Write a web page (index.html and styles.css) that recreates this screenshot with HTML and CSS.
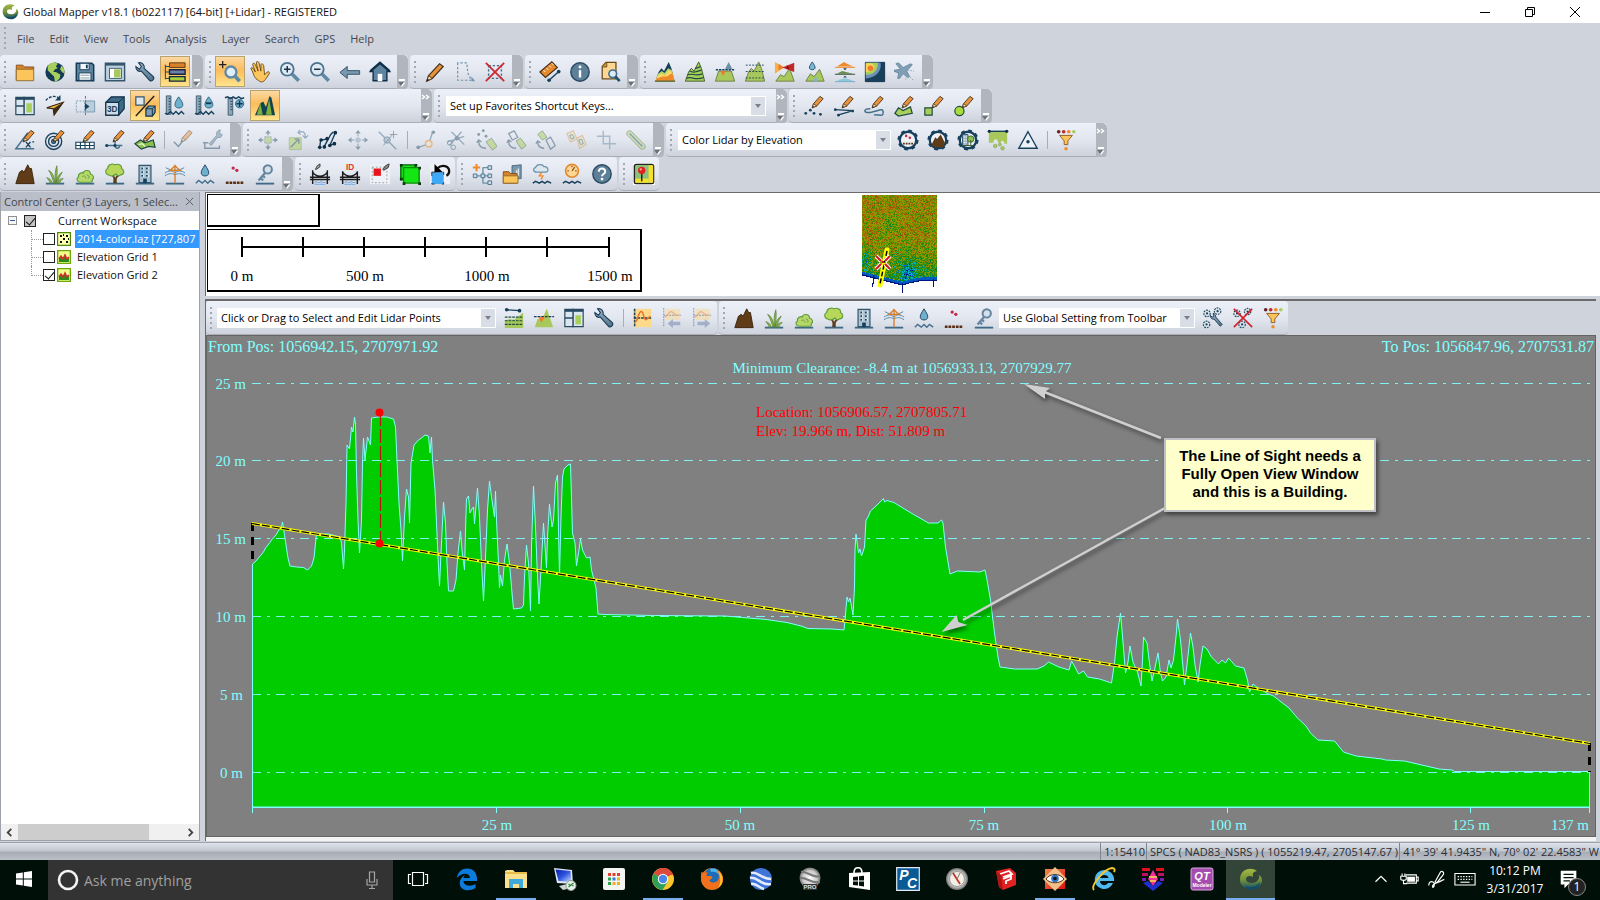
FILE: index.html
```html
<!DOCTYPE html>
<html lang="en">
<head>
    <meta charset="UTF-8">
    <title>Global Mapper v18.1</title>
    <link rel="stylesheet" href="styles.css">
</head>
<body>

    <!-- Gradients used by the icons -->
    <svg class="gradients" aria-hidden="true">
        <defs>
            <linearGradient id="g-steel" x1="0" y1="0" x2="0" y2="1"><stop offset="0" stop-color="#9db4c6"/><stop offset="1" stop-color="#4d7189"/></linearGradient>
            <linearGradient id="g-logo" x1="0" y1="0" x2="0" y2="1"><stop offset="0" stop-color="#a3b845"/><stop offset=".55" stop-color="#6f8f3a"/><stop offset="1" stop-color="#0f4d6b"/></linearGradient>
            <linearGradient id="g-screen" x1="0" y1="0" x2="1" y2="1"><stop offset="0" stop-color="#0a1eb0"/><stop offset=".5" stop-color="#2f55e0"/><stop offset="1" stop-color="#cfe0ff"/></linearGradient>
            <linearGradient id="g-red" x1="0" y1="0" x2="1" y2="1"><stop offset="0" stop-color="#f08a4a"/><stop offset="1" stop-color="#e01010"/></linearGradient>
            <radialGradient id="g-silver"><stop offset="0" stop-color="#fff"/><stop offset=".7" stop-color="#c9c9c9"/><stop offset="1" stop-color="#6c6c6c"/></radialGradient>
        </defs>
    </svg>

    <!-- Icon sprite -->
    <svg class="sprite" aria-hidden="true">
        <defs>
            <g id="pencil"><path d="M10 14l1.500-4.500L18.500 1.500l3.500 2.500-7 8z" fill="#e8923a" stroke="#4a3420" stroke-width="1"/><path d="M10 14l1.500-4.500 3.500 2.500z" fill="#f6d9a8" stroke="#4a3420" stroke-width=".8"/><path d="M10 14l.8-2 1.200.9z" fill="#222"/></g>
            <g id="base"><path d="M2 22.500h20" stroke="#3f6a86" stroke-width="2"/></g>
            <g id="gear"><circle cx="12" cy="12" r="9" fill="#eef2f7" stroke="#17405c" stroke-width="2.500"/><circle cx="12" cy="12" r="10.300" fill="none" stroke="#17405c" stroke-width="2.400" stroke-dasharray="4 4.090"/></g>
        </defs>

        <symbol id="i-logo" viewBox="0 0 24 24"><path d="M1 12a11 9.500 0 0 0 22 2c0-3-1-5-3-6 1 4-2 8-7 8-4 0-6-2-6-4 0-3 4-4 7-2 0-3-1-5 4-6C11-1 1 3 1 12z" fill="url(#g-logo)"/><path d="M6 19c5 2 12 1 15-4 0 9-12 10-15 4z" fill="#0f4d6b"/></symbol>
        <symbol id="i-folder" viewBox="0 0 24 24"><path d="M2.500 21V4.500h7l2 2h10V9" fill="#d9822b" stroke="#7d4d1b"/><path d="M2.500 9h19v12.500h-19z" fill="#fbc55c" stroke="#8d6a2f"/></symbol>
        <symbol id="i-globe" viewBox="0 0 24 24"><circle cx="12" cy="12" r="10.500" fill="#123a57"/><path d="M6 3c4-2 8-1 9 0l-2 3 2 2-3 1-2 3 3 0 5 3-1 4-3 3-2 1-1-6-4-4-3-3c0-3 0-5 2-7z" fill="#a8cf5c"/><path d="M19 5l3 4 .5 5-3-2-2-3z" fill="#a8cf5c"/></symbol>
        <symbol id="i-save" viewBox="0 0 24 24"><path d="M2.500 2.500h17l2 2v17h-19z" fill="#5f84a0" stroke="#123a57" stroke-width="1.600"/><path d="M6.500 2.500h10v7h-10z" fill="#f4f7fa" stroke="#123a57"/><path d="M13 4h2v4h-2z" fill="#123a57"/><path d="M5.500 13h13v8h-13z" fill="#fff" stroke="#123a57"/><path d="M7 15.500h10M7 18.500h10" stroke="#7e97a9"/></symbol>
        <symbol id="i-window" viewBox="0 0 24 24"><path d="M1.500 2.500h21v19h-21z" fill="#bcd0de" stroke="#35566d" stroke-width="1.500"/><path d="M1.500 4h21" stroke="#35566d" stroke-width="2"/><path d="M6 8h13v11H6z" fill="#fff" stroke="#35566d"/><path d="M11 9h7v9h-7z" fill="#a8c85c"/></symbol>
        <symbol id="i-wrench" viewBox="0 0 24 24"><path d="M2 6c0 4 3 6 6 5l9 10c2 2 6-1 4-4l-10-9c1-3-2-7-6-6l3 4-2 3z" fill="url(#g-steel)" stroke="#173a54" stroke-width="1.200"/></symbol>
        <symbol id="i-layers" viewBox="0 0 24 24"><path d="M1.500 4v16M1.500 6h5M1.500 12h5M1.500 19h5" stroke="#173a54" fill="none"/><path d="M6 2h17v5H6z" fill="#d9822b" stroke="#5a3411"/><path d="M6 9.500h17v5H6z" fill="#6e7fa6" stroke="#16243f" stroke-width="1.500"/><path d="M6 17h17v5H6z" fill="#a8cf3c" stroke="#16243f" stroke-width="1.500"/></symbol>
        <symbol id="i-zoomsel" viewBox="0 0 24 24"><path d="M4 0v8M0 4h8" stroke="#222" stroke-width="1.400"/><circle cx="13" cy="12" r="6" fill="#dfeef8" stroke="#5f8aa5" stroke-width="2.500"/><path d="M17.500 16.500l5 5.500" stroke="#5f8aa5" stroke-width="4"/></symbol>
        <symbol id="i-hand" viewBox="0 0 24 24"><path d="M10 21c-4-2-5-6-6-9l-2-4c0-1 2-1 3 1l2 3-3-8c0-2 2-2 3 0l3 7-2-9c0-2 2-2 3 0l2 9 0-7c1-2 2-1 3 1l1 10 3-3c1-1 3 0 2 2l-4 6c-2 3-5 4-8 1z" fill="#fbc55c" stroke="#6c4d1b"/></symbol>
        <symbol id="i-zoomin" viewBox="0 0 24 24"><circle cx="9" cy="9" r="7" fill="#dfeaf3" stroke="#4b7490" stroke-width="2"/><path d="M9 5.500v7M5.500 9h7" stroke="#16324a" stroke-width="1.600"/><path d="M14.500 14.500l7 7" stroke="#5f8aa5" stroke-width="4"/></symbol>
        <symbol id="i-zoomout" viewBox="0 0 24 24"><circle cx="9" cy="9" r="7" fill="#dfeaf3" stroke="#4b7490" stroke-width="2"/><path d="M5.500 9h7" stroke="#16324a" stroke-width="1.600"/><path d="M14.500 14.500l7 7" stroke="#5f8aa5" stroke-width="4"/></symbol>
        <symbol id="i-back" viewBox="0 0 24 24"><path d="M1 12.500l8-6.500v4.500h13.500v4H9V19z" fill="#7b98ad" stroke="#2a4c64"/></symbol>
        <symbol id="i-home" viewBox="0 0 24 24"><path d="M1.500 11.500L12 2.500l10.500 9h-3v10h-15v-10z" fill="#5f84a0" stroke="#0f2f48" stroke-width="1.500"/><path d="M1.500 11L12 2l10.500 9" fill="none" stroke="#0f2f48" stroke-width="2.500"/><path d="M9.500 14h5v8h-5z" fill="#fff"/></symbol>
        <symbol id="i-pencil" viewBox="0 0 24 24"><path d="M3 22l2-6L17 3l4 3L9 19z" fill="#e8923a" stroke="#4a3420" stroke-width="1.300"/><path d="M3 22l2-6 4 3z" fill="#f6d9a8" stroke="#4a3420"/><path d="M3 22l1-2.500 1.500 1z"/></symbol>
        <symbol id="i-poly" viewBox="0 0 24 24"><path d="M4 2v19h15l-4-8-1-11z" fill="none" stroke="#6f93b0" stroke-width="1.300" stroke-dasharray="2.500 2"/><path d="M19 17v5h4z" fill="#6f93b0"/></symbol>
        <symbol id="i-delete" viewBox="0 0 24 24"><path d="M5 5h14v14H5z" fill="none" stroke="#3f6a86" stroke-width="1.500" stroke-dasharray="2.500 2"/><path d="M2 2l20 20M22 2L2 22" stroke="#cc2a33" stroke-width="2"/></symbol>
        <symbol id="i-ruler" viewBox="0 0 24 24"><path d="M1 12L14 1l6 6L7 18z" fill="#e58a2e" stroke="#4a2e12" stroke-width="1.300"/><path d="M5 10l2 2M8 7.500l2 2M11 5l2 2M14 2.500l2 2" stroke="#fff"/><path d="M11 21l10-9" stroke="#17405c" stroke-width="1.600"/><circle cx="11" cy="21" r="2" fill="#17405c"/><circle cx="21.500" cy="11.500" r="2" fill="#17405c"/></symbol>
        <symbol id="i-info" viewBox="0 0 24 24"><circle cx="12" cy="12" r="10" fill="#5d8098" stroke="#2b4c63" stroke-width="1.600"/><path d="M12 10v8" stroke="#fff" stroke-width="2.600"/><circle cx="12" cy="6.500" r="1.600" fill="#fff"/></symbol>
        <symbol id="i-find" viewBox="0 0 24 24"><path d="M7.500 1.500h11v18h-15V6z" fill="#fcd793" stroke="#6a4b1a" stroke-width="1.400"/><path d="M3.500 6.500h5v-5" fill="#d9962f" stroke="#6a4b1a"/><circle cx="15" cy="14" r="4.200" fill="#dcebf5" stroke="#45708d" stroke-width="1.800"/><path d="M18 17l4.500 5" stroke="#23506e" stroke-width="3"/></symbol>
        <symbol id="i-mt1" viewBox="0 0 24 24"><path d="M1.500 22L5 12l3-4 3 3 5-10 3 7 3.500 14z" fill="#17405c"/><path d="M4.500 14l4-3 3 2 4-5 4 2 3 12H1.500z" fill="#b9d46a"/><path d="M4 16l4-2 4 2 4-6 4 3 2.500 9H1.500z" fill="#fcd768"/><path d="M3 19l6-2 5 0 6-4 2.500 9H1.500z" fill="#ef8a2c"/><path d="M1 22h22" stroke="#5b6b3a" stroke-width="1.500"/></symbol>
        <symbol id="i-mt2" viewBox="0 0 24 24"><path d="M1.500 22L5 12l3-4 3 3 5-10 3 7 3.500 14z" fill="#a8cf5c" stroke="#3d5a2c"/><path d="M2.500 19c6-3 9 3 19-1M4 15c5-2 8 2 16-1M6 11c4 2 7 1 13-1M12 8c2 0 4-1 6-2" fill="none" stroke="#1d4a3f" stroke-width="1.300"/></symbol>
        <symbol id="i-mt3" viewBox="0 0 24 24"><path d="M1.500 22L5 11h14l3.500 11z" fill="#a8c85c" stroke="#6c7f46"/><path d="M12 9l4-8 4 8z" fill="#6c90a8"/><path d="M2 9.500h20" stroke="#17405c" stroke-width="1.600" stroke-dasharray="2.500 1"/><path d="M7 11h6l-3 5z" fill="#ef7a2c"/></symbol>
        <symbol id="i-mt4" viewBox="0 0 24 24"><path d="M1.500 22L5 12l3-4 3 3 5-10 3 7 3.500 14z" fill="#a8c85c" stroke="#6c7f46"/><path d="M2 4.500h20M2 11.500h20M2 18.500h20" stroke="#17405c" stroke-dasharray="2 1.500"/></symbol>
        <symbol id="i-mt5" viewBox="0 0 24 24"><path d="M2 22l5-7 4 2 6-9 5 14z" fill="#a8c85c" stroke="#6c7f46"/><path d="M11 7L1 1v13z" fill="#f7b04a"/><path d="M11 7L5 3v7z" fill="#ef7a2c"/><path d="M9 7l13-5v10z" fill="#c42727"/><path d="M14 4v5l3-1z" fill="#7a1414"/></symbol>
        <symbol id="i-mt6" viewBox="0 0 24 24"><path d="M2 22l5-8 4 3 6-8 5 13z" fill="#a8c85c" stroke="#6c7f46"/><path d="M9 1c2 3 3.500 5 3 7-.5 2-5.500 2-6 0-.5-2 1-4 3-7z" fill="#7db6d4" stroke="#1d4f6b"/><path d="M10 22l3-6 2 6z" fill="#7db6d4"/></symbol>
        <symbol id="i-mt7" viewBox="0 0 24 24"><path d="M3 6l5-3 3-2 3 2 7 3z" fill="#ef8a2c"/><path d="M1 7h22" stroke="#ef8a2c"/><path d="M10 8h4l-2 2z" fill="#17405c"/><path d="M3 14l6-3 4 1 8 2z" fill="#6a8a4a"/><path d="M1 14.500h22" stroke="#2c4a2c"/><path d="M10 18h4l-2-2z" fill="#17405c"/><path d="M3 22c6-4 12-4 18 0z" fill="#8fc7de"/><path d="M1 22.500h22" stroke="#6fa9c4"/></symbol>
        <symbol id="i-mt8" viewBox="0 0 24 24"><path d="M1.500 1.500h21v21h-21z" fill="#17405c" stroke="#0f2f48"/><path d="M2 2h16c2 9-6 17-16 17z" fill="#6c90b8"/><path d="M2 2h13c1 8-5 14-13 13z" fill="#a8cf5c"/><path d="M2 3c12-3 13 9 0 9z" fill="#f9d455"/><circle cx="7" cy="8" r="3" fill="#ef7a2c"/></symbol>
        <symbol id="i-plane" viewBox="0 0 24 24"><path d="M2 3l3-1 5 5 8-4 2 1-6 7 3 6-2 1-5-4-4 5-2 0 1-6-6-2 1-1 7-1z" fill="#7f9fb5" stroke="#4a6c84" stroke-width=".6"/><path d="M12 20l4-3M14 10l8 1M17 17l5 5" stroke="#8aa6b9" stroke-dasharray="2 1.500"/></symbol>

        <symbol id="i-panes" viewBox="0 0 24 24"><path d="M2 2.500h20v19H2z" fill="#dbe6ee" stroke="#274a62" stroke-width="1.300"/><path d="M2 4h20" stroke="#274a62" stroke-width="2.500"/><path d="M11 2v20M2 12h9" stroke="#274a62" stroke-width="1.600"/><path d="M13.500 9h6v10h-6z" fill="#a8cf5c"/></symbol>
        <symbol id="i-nav" viewBox="0 0 24 24"><path d="M2 6c4-5 11-6 15-2" fill="none" stroke="#17405c" stroke-width="1.500" stroke-dasharray="3 1.500"/><path d="M18 0v6h-6z" fill="#17405c"/><path d="M3 14L21 8l-10 14-1-7z" fill="#f4b443" stroke="#31220f" stroke-width="1.200"/><path d="M10 15l11-7-10 14z" fill="#3c2b15"/></symbol>
        <symbol id="i-split" viewBox="0 0 24 24"><path d="M2.500 6.500h9v12h-9z" fill="none" stroke="#7596ad" stroke-dasharray="2 1.500"/><path d="M12.500 6.500h10v12h-10z" fill="#b9cdda" stroke="#7596ad"/><path d="M12.500 1v22" stroke="#45708d" stroke-dasharray="3 1.500"/><path d="M12 9l5 3.500-5 3.500z" fill="#17405c"/></symbol>
        <symbol id="i-3d" viewBox="0 0 24 24"><path d="M2 8l6-6h14v13l-6 7H2z" fill="#3f6a86" stroke="#0f2f48" stroke-width="1.300"/><path d="M2 8h14v14H2z" fill="#cddce6" stroke="#0f2f48" stroke-width="1.300"/><path d="M16 8l6-6" stroke="#0f2f48"/><text x="9" y="18" class="t-3d">3D</text></symbol>
        <symbol id="i-2d3d" viewBox="0 0 24 24"><path d="M2 2h9v9H2z" fill="#dbe6ee" stroke="#35566d" stroke-width="1.300"/><path d="M22 1L2 23" stroke="#222" stroke-width="1.500"/><path d="M13 15l3-3h7v7l-3 4h-7z" fill="#7fa0b5" stroke="#0f2f48" stroke-width="1.300"/><path d="M13 15h7v8M20 15l3-3" fill="none" stroke="#0f2f48"/></symbol>
        <symbol id="i-water1" viewBox="0 0 24 24"><path d="M2.500 1h5v20h-5z" fill="#8fa7b8" stroke="#3d5b70"/><path d="M5 4h2M5 7h2M5 10h2M5 13h2M5 16h2" stroke="#17405c"/><path d="M16 2c3 4 5 7 4.500 9.500-.5 3.500-8 3.500-8.500 0C11.500 9 13 6 16 2z" fill="#6fb0cc" stroke="#2a6580"/><path d="M1 20l3 1 3-3 3 3 3-3 3 3 3-3 3 3" fill="none" stroke="#17405c" stroke-width="1.500"/></symbol>
        <symbol id="i-water2" viewBox="0 0 24 24"><use href="#i-water1"/><path d="M13 9h6" stroke="#123a57" stroke-width="2"/></symbol>
        <symbol id="i-water3" viewBox="0 0 24 24"><path d="M4.500 3h5v19h-5z" fill="#8fa7b8" stroke="#3d5b70"/><path d="M7 7h2M7 10h2M7 13h2M7 16h2" stroke="#17405c"/><path d="M1 3l3-1 3 2 3-2 3 2 3-2 3 2 3-1" fill="none" stroke="#17405c" stroke-width="1.500"/><circle cx="17" cy="9.500" r="4.500" fill="#6fb0cc" stroke="#2a6580"/><path d="M17 6v7M13.500 9.500h7" stroke="#123a57" stroke-width="1.600"/></symbol>
        <symbol id="i-hills" viewBox="0 0 24 24"><path d="M1 22L7 9l3-2 3 6 4-12 2 2 4 19z" fill="#12444f"/><path d="M3 21.500L7 9l2.500 12.500z" fill="#7fae3c"/><path d="M13 21.500L16.500 4l3 17.500z" fill="#7fae3c"/></symbol>

        <symbol id="i-pts" viewBox="0 0 24 24"><use href="#pencil"/><g fill="#17405c"><circle cx="3" cy="20" r="1.500"/><circle cx="8" cy="16.500" r="1.500"/><circle cx="12" cy="20" r="1.500"/><circle cx="19" cy="21" r="1.500"/></g></symbol>
        <symbol id="i-line" viewBox="0 0 24 24"><path d="M2 16l20 1-17 5" fill="none" stroke="#17405c" stroke-width="1.500"/><g fill="#17405c"><circle cx="2.500" cy="16" r="1.500"/><circle cx="21.500" cy="17.500" r="1.500"/><circle cx="6" cy="22" r="1.500"/></g><use href="#pencil"/></symbol>
        <symbol id="i-free" viewBox="0 0 24 24"><path d="M8 15c-8 0-8 5 0 4s14-6 14 0-6 1-10 3" fill="none" stroke="#45708d" stroke-width="1.600"/><use href="#pencil"/></symbol>
        <symbol id="i-area" viewBox="0 0 24 24"><path d="M2 20l4-6 5 3 8-4 2 7-15 3z" fill="#a8cf5c" stroke="#1d4a3f" stroke-width="1.300"/><use href="#pencil"/></symbol>
        <symbol id="i-rect" viewBox="0 0 24 24"><path d="M2 14h8v8H2z" fill="#a8cf5c" stroke="#1d4a3f" stroke-width="1.300"/><use href="#pencil"/></symbol>
        <symbol id="i-circ" viewBox="0 0 24 24"><circle cx="7" cy="17.500" r="5" fill="#a8dc3c" stroke="#1d4a3f" stroke-width="1.300"/><use href="#pencil"/></symbol>

        <symbol id="i-angle" viewBox="0 0 24 24"><path d="M15 4L2 21.500h20" fill="none" stroke="#45708d" stroke-width="1.600"/><path d="M13 14l5 6M18 14l-5 6M20 14h2" stroke="#17405c" stroke-width="1.500"/><use href="#pencil"/></symbol>
        <symbol id="i-rings" viewBox="0 0 24 24"><g fill="none" stroke="#17405c" stroke-width="1.500"><circle cx="10.500" cy="13.500" r="8.800"/><circle cx="10.500" cy="13.500" r="5.500"/><circle cx="10.500" cy="13.500" r="2"/></g><use href="#pencil"/></symbol>
        <symbol id="i-cgrid" viewBox="0 0 24 24"><path d="M2 14.500h20v7H2zM2 18h20M7 14.500v7M12 14.500v7M17 14.500v7" fill="#fff" stroke="#17405c" stroke-width="1.200"/><use href="#pencil"/></symbol>
        <symbol id="i-cogo" viewBox="0 0 24 24"><path d="M2 18h18M12 13v5c0 4 5 4 5 0" fill="none" stroke="#45708d" stroke-width="1.500"/><circle cx="3" cy="18" r="1.700" fill="#17405c"/><circle cx="12" cy="18" r="1.700" fill="#17405c"/><use href="#pencil"/></symbol>
        <symbol id="i-buffer" viewBox="0 0 24 24"><path d="M1 16l6-4 5 3 9-3 2 8-7-1-8 3z" fill="#8cc04c" stroke="#1d4a3f" stroke-width="1.300"/><path d="M5 17l4-1 3 3" fill="none" stroke="#eaf5d5" stroke-width="1.500"/><use href="#pencil"/></symbol>
        <symbol id="i-checkp" viewBox="0 0 24 24"><path d="M2 14l5 5 8-10" fill="none" stroke="#2b4c63" stroke-width="1.500"/><use href="#pencil"/></symbol>
        <symbol id="i-wrenchb" viewBox="0 0 24 24"><path d="M8 16l8-9c-1-3 1-6 4-6l-1 4 3 1c0 3-3 4-5 3l-7 9z" fill="#6c90a8" stroke="#35566d"/><path d="M1 15h6M3 15v6h16v-3" fill="none" stroke="#35566d" stroke-width="1.500"/></symbol>

        <symbol id="i-move" viewBox="0 0 24 24"><path d="M8.500 8.500h7v7h-7z" fill="#a8c85c" stroke="#4a6a86" stroke-dasharray="2 1"/><g fill="#35566d"><path d="M12 1l3 4H9zM12 23l3-4H9zM1 12l4-3v6zM23 12l-4-3v6z"/><path d="M11.300 4h1.400v3h-1.400zM11.300 17h1.400v3h-1.400zM4 11.300h3v1.400H4zM17 11.300h3v1.400h-3z"/></g></symbol>
        <symbol id="i-scale" viewBox="0 0 24 24"><path d="M2.500 9.500h13v13h-13z" fill="#a8cf5c" stroke="#7f9a58"/><path d="M4 20l9-9M13 11v5M13 11H8" fill="none" stroke="#2b4c63" stroke-width="1.500"/><path d="M13 4c5-3 7 0 7 5M14 1l-2 3 3 2M17 7l3 3 3-3" fill="none" stroke="#45708d" stroke-width="1.300"/></symbol>
        <symbol id="i-vertex" viewBox="0 0 24 24"><path d="M3 20l1-8 8-1-5 10 8-15 3-3M20 4l-6 14 5-2" fill="none" stroke="#17405c" stroke-width="1.500"/><g fill="#0f2f48"><circle cx="3" cy="20" r="2"/><circle cx="4.500" cy="12" r="2"/><circle cx="11" cy="10.500" r="2"/><circle cx="8" cy="19.500" r="2"/><circle cx="14" cy="18" r="2"/><circle cx="19" cy="16" r="2"/><circle cx="20" cy="4" r="2"/></g></symbol>
        <symbol id="i-movev" viewBox="0 0 24 24"><circle cx="12" cy="12" r="3" fill="#8aa6b9"/><g fill="#35566d"><path d="M12 1l3 4H9zM12 23l3-4H9zM1 12l4-3v6zM23 12l-4-3v6z"/></g><path d="M12 5v3M12 16v3M5 12h3M16 12h3" stroke="#35566d"/></symbol>
        <symbol id="i-addv" viewBox="0 0 24 24"><path d="M2 3l19 19" stroke="#45708d" stroke-width="1.600"/><circle cx="11" cy="12" r="3.500" fill="#8aa6b9" stroke="#35566d"/><path d="M18 2v8M14 6h8M7 18l10-12" stroke="#35566d"/></symbol>
        <symbol id="i-endv" viewBox="0 0 24 24"><path d="M4 20l11-4 4-12" fill="none" stroke="#45708d" stroke-width="1.500"/><circle cx="15" cy="16" r="3.500" fill="#fce2c4" stroke="#e58a2e" stroke-width="1.500"/><circle cx="3.500" cy="20" r="2" fill="#35566d"/><circle cx="20" cy="3.500" r="2" fill="#35566d"/></symbol>
        <symbol id="i-cut" viewBox="0 0 24 24"><path d="M7 3l14 14M18 3L5 18M3 14l18-6" stroke="#45708d" stroke-width="1.400"/><circle cx="5" cy="15" r="2.500" fill="none" stroke="#35566d"/><circle cx="9" cy="20" r="2.500" fill="none" stroke="#35566d"/><circle cx="13" cy="10" r="2.500" fill="#35566d"/></symbol>
        <symbol id="i-join1" viewBox="0 0 24 24"><g fill="#35566d"><circle cx="4" cy="6" r="1.600"/><circle cx="9" cy="2" r="1.600"/><circle cx="12" cy="8" r="1.600"/></g><path d="M4 13c0 6 4 8 8 8M2 15l2-3 3 2" fill="none" stroke="#35566d" stroke-width="1.500"/><path d="M12 14l6-4 6 9-5 4z" fill="#a8cf5c" stroke="#4a6a3a"/></symbol>
        <symbol id="i-join2" viewBox="0 0 24 24"><path d="M4 5l6-3 4 7-6 3z" fill="none" stroke="#35566d" stroke-width="1.400"/><path d="M4 13c0 6 4 8 8 8M2 15l2-3 3 2" fill="none" stroke="#35566d" stroke-width="1.500"/><path d="M12 13l5-3 6 8-5 4z" fill="#a8cf5c" stroke="#4a6a3a"/></symbol>
        <symbol id="i-join3" viewBox="0 0 24 24"><path d="M3 6l5-4 5 7-5 3z" fill="#a8cf5c" stroke="#4a6a3a"/><path d="M3 14c0 6 4 7 7 7M1 16l2-3 3 2" fill="none" stroke="#35566d" stroke-width="1.500"/><path d="M12 12l5-3 5 9-5 4z" fill="none" stroke="#35566d" stroke-width="1.400"/></symbol>
        <symbol id="i-copy2" viewBox="0 0 24 24"><path d="M2 5l7-3 4 9-7 3z" fill="#dcebb9" stroke="#e0a060" stroke-width="1.400"/><path d="M13 10l6-3 4 10-7 4z" fill="#dcebb9" stroke="#e0a060" stroke-width="1.400"/><path d="M5 7l3-1 2 4-3 1zM15 12l3-1 2 5-3 1z" fill="none" stroke="#35566d"/></symbol>
        <symbol id="i-crop" viewBox="0 0 24 24"><path d="M2 8h14v14M9 2v14h14" fill="none" stroke="#6c90a8" stroke-width="1.600"/></symbol>
        <symbol id="i-pill" viewBox="0 0 24 24"><path d="M5 5l14 14" stroke="#6c8c4c" stroke-width="7" stroke-linecap="round"/><path d="M5 5l14 14" stroke="#b9da86" stroke-width="5" stroke-linecap="round"/><path d="M5 5l14 14" stroke="#35566d" stroke-width="1.500"/></symbol>

        <symbol id="i-gear1" viewBox="0 0 24 24"><use href="#gear"/><circle cx="10" cy="7.500" r="1.400" fill="#c42747"/><circle cx="14" cy="9.500" r="1.400" fill="#c42747"/><path d="M6.500 16h11" stroke="#5a3411" stroke-width="2" stroke-dasharray="2 1"/></symbol>
        <symbol id="i-gear2" viewBox="0 0 24 24"><use href="#gear"/><path d="M5 17l4-8 2 2 4-5 5 10-3 4H8z" fill="#5f3c17"/></symbol>
        <symbol id="i-gear3" viewBox="0 0 24 24"><use href="#gear"/><path d="M6 6h6v12H6z" fill="#9db4c6" stroke="#35566d"/><path d="M8 8v9M10 8v9" stroke="#fff" stroke-dasharray="1.500 1.500"/><circle cx="15" cy="11" r="3.500" fill="#8cc04c" stroke="#3d6a2c"/><path d="M15 12v6M6 18h12" stroke="#3d5a2c"/></symbol>
        <symbol id="i-slice" viewBox="0 0 24 24"><path d="M2 3h20v13h-3c0-4-4-4-4-1h-3c0-5-5-5-5 0H2z" fill="#a8c85c"/><path d="M2 2.500h20" stroke="#17405c" stroke-width="1.500"/><circle cx="2.500" cy="2.500" r="1.800" fill="#0f2f48"/><circle cx="21.500" cy="2.500" r="1.800" fill="#0f2f48"/><g fill="#a8c85c" stroke="#7f9a58" stroke-width=".6"><circle cx="9" cy="18.500" r="2"/><circle cx="14" cy="17" r="1.600"/><circle cx="17" cy="21" r="2"/></g></symbol>
        <symbol id="i-tri" viewBox="0 0 24 24"><path d="M12 3L22 21H2z" fill="#eef2f7" stroke="#17405c" stroke-width="1.500"/><circle cx="12" cy="14" r="1.900" fill="#17405c"/></symbol>
        <symbol id="i-filter" viewBox="0 0 24 24"><circle cx="4" cy="3" r="2" fill="#6a2222"/><circle cx="9.500" cy="3" r="2" fill="#c42727"/><circle cx="15" cy="3" r="2" fill="#ef8a2c"/><circle cx="20.500" cy="3" r="2" fill="#a8cf5c"/><path d="M5 7h14l-5 6v4h-4v-4z" fill="#fbc55c" stroke="#8d5a1f"/><circle cx="12" cy="21.500" r="1.900" fill="#ef8a2c"/></symbol>

        <symbol id="i-ground" viewBox="0 0 24 24"><path d="M2 22.500L6 10l3-2 2 2 4-8 2 4 2 0 3 16.500z" fill="#5f3c17" stroke="#3b240c"/></symbol>
        <symbol id="i-grass" viewBox="0 0 24 24"><use href="#base"/><path d="M12 22C11 14 9 10 5 8c3 4 4 9 6 14zM12 22c0-8 0-14 2-19 1 6 0 13-1 19zM13 22c1-6 3-10 7-12-3 4-4 8-6 12zM9 22c-1-4-3-5-6-6 2 2 3 4 4 6zM15 22c1-4 3-5 6-5-2 1-3 3-4 5z" fill="#8cb84c" stroke="#4e7a2c" stroke-width=".7"/></symbol>
        <symbol id="i-bush" viewBox="0 0 24 24"><use href="#base"/><path d="M7 21c-4 0-5-4-2-6-1-4 4-5 5-4 1-4 8-4 8 1 4 1 4 5 2 6 1 3-2 3-4 3z" fill="#b6d86a" stroke="#5f9a3c" stroke-width="1.200"/><path d="M9 15c2-2 4 0 4 2M14 13c2 0 3 2 2 4" fill="none" stroke="#5f9a3c"/></symbol>
        <symbol id="i-tree" viewBox="0 0 24 24"><use href="#base"/><path d="M11 22c1-5 0-8-3-9M13 22c-1-5 1-8 4-9" fill="none" stroke="#5a3d1a" stroke-width="2"/><path d="M5 13c-4-1-4-6-1-7 0-4 5-6 8-4 4-2 8 1 7 4 4 2 3 7-1 7-2 2-4 0-5-1-2 2-5 3-8 1z" fill="#b6d75a" stroke="#5f9a3c" stroke-width="1.200"/></symbol>
        <symbol id="i-bldg" viewBox="0 0 24 24"><use href="#base"/><path d="M5.500 2.500h13v19h-13z" fill="#a9c2d3" stroke="#35566d" stroke-width="1.300"/><path d="M8 6h3M13 6h3M8 10h3M13 10h3M8 14h3M13 14h3" stroke="#fff" stroke-width="2.500"/><path d="M8 6h2M13 6h2M8 10h2M13 10h2M8 14h2M13 14h2" stroke="#17405c" stroke-width="2"/><path d="M10 17h4v5h-4z" fill="#17405c"/></symbol>
        <symbol id="i-power" viewBox="0 0 24 24"><use href="#base"/><path d="M2 5c6 4 14 4 20 0M1 11c4-3 8-3 11 0 3-3 7-3 11 0M1 14c4-3 8-3 11-1 3-2 7-2 11 1" fill="none" stroke="#4f84a6"/><path d="M12 2v20M5 8h14M12 3L7 8M12 3l5 5" fill="none" stroke="#d9822b" stroke-width="1.500"/></symbol>
        <symbol id="i-drop" viewBox="0 0 24 24"><path d="M12 2c3 5 4.500 7 4 9.500-.5 3.500-7.500 3.500-8 0C7.500 9 9 7 12 2z" fill="#6fb0cc" stroke="#17405c"/><path d="M2 22l3-3 4 3 3-3 3 3 3-3 4 3" fill="none" stroke="#45708d" stroke-width="1.500"/></symbol>
        <symbol id="i-noise" viewBox="0 0 24 24"><circle cx="10" cy="5.500" r="1.800" fill="#c42747"/><circle cx="14" cy="8" r="1.800" fill="#c42747"/><path d="M2 21.500h20" stroke="#5a2e11" stroke-width="2.600" stroke-dasharray="3 1"/></symbol>
        <symbol id="i-key" viewBox="0 0 24 24"><use href="#base"/><circle cx="15" cy="7" r="4.500" fill="#d5e0e8" stroke="#6485a0" stroke-width="2.200"/><path d="M12 11L5 19M7 16l3 3M9 13l3 3" fill="none" stroke="#6485a0" stroke-width="2.400"/></symbol>

        <symbol id="i-bridge" viewBox="0 0 24 24"><path d="M4 8v15M20 8v15M1 15.500h22M4 10c4 6 12 6 16 0M1 18h22" fill="none" stroke="#1c1c1c" stroke-width="1.600"/><path d="M6 21c2-2 4 2 6 0s4 2 6 0M6 23.500c2-2 4 2 6 0s4 2 6 0" fill="none" stroke="#5aa0e8"/><path d="M7 7l2-4 3-2 0 3-4 3z" fill="#aaa" stroke="#333"/></symbol>
        <symbol id="i-bridgeid" viewBox="0 0 24 24"><path d="M4 9v14M20 9v14M1 15.500h22M4 10c4 6 12 6 16 0M1 18h22" fill="none" stroke="#1c1c1c" stroke-width="1.600"/><path d="M6 21c2-2 4 2 6 0s4 2 6 0M6 23.500c2-2 4 2 6 0s4 2 6 0" fill="none" stroke="#5aa0e8"/><text x="12" y="8" class="t-id">ID</text></symbol>
        <symbol id="i-redsel" viewBox="0 0 24 24"><path d="M1 1h22v22H1z" fill="#eef1f6"/><path d="M3.500 4.500h16v17h-16z" fill="none" stroke="#999" stroke-dasharray="2 2"/><path d="M5 6h8v8H5z" fill="#e8141c"/><path d="M15 7l3-4 4-2-1 4-5 3z" fill="#888" stroke="#333"/></symbol>
        <symbol id="i-greensq" viewBox="0 0 24 24"><path d="M2 2h16v16H2z" fill="#14e614" stroke="#0a5c0a" stroke-width="1.500"/><path d="M5 5h17v17H5z" fill="#14e614" stroke="#0a8c0a" stroke-width="1.500"/><g fill="#0a3c0a"><path d="M1 1h3v3H1zM17 1h3v3h-3zM1 16h3v3H1zM4 21h3v3H4zM21 21h3v3h-3zM21 4h3v3h-3z"/></g></symbol>
        <symbol id="i-undo" viewBox="0 0 24 24"><path d="M1 1h22v22H1z" fill="#eef1f6"/><path d="M3 10h13v13H3z" fill="#3fa9f5" stroke="#333" stroke-dasharray="4 8"/><path d="M9 6c5-5 13-3 13 3 0 3-1 4-3 5" fill="none" stroke="#111" stroke-width="2.500"/><path d="M6 1v9h9z"/></symbol>
        <symbol id="i-nodes" viewBox="0 0 24 24"><path d="M6 1v8M2 5h8" stroke="#ef8a2c" stroke-width="2.200"/><path d="M5 14h14M13 5v17M13 5h6M13 22h6" fill="none" stroke="#6c90a8" stroke-width="1.500"/><g fill="#cddce6" stroke="#45708d"><path d="M2.500 12h4v4h-4zM18.500 3h4v4h-4zM18.500 12h4v4h-4zM18.500 19.500h4v4h-4zM11 12h4v4h-4z"/></g></symbol>
        <symbol id="i-folders" viewBox="0 0 24 24"><path d="M12 3l10-1v15H12z" fill="#7b98ad" stroke="#45657d"/><path d="M17 8v6M19 6v8" stroke="#dbe6ee" stroke-width="1.500"/><path d="M2.500 22V9.500h6l2 2h7V22z" fill="#d9822b" stroke="#7d4d1b"/><path d="M2.500 14h16v8h-16z" fill="#fbc55c" stroke="#8d6a2f"/></symbol>
        <symbol id="i-storm" viewBox="0 0 24 24"><path d="M6 10c-4 0-4-5-1-5 1-4 8-4 9-1 5-1 6 6 2 6z" fill="#dbe6ee" stroke="#6c90a8" stroke-width="1.300"/><path d="M12 10l-3 4h4l-2 4" fill="none" stroke="#ef8a2c" stroke-width="1.500"/><path d="M2 22l3-2 4 2 3-2 3 2 3-2 4 2" fill="none" stroke="#17405c" stroke-width="1.600"/></symbol>
        <symbol id="i-gauge" viewBox="0 0 24 24"><circle cx="12" cy="8.500" r="7" fill="#fcd793" stroke="#e58a2e" stroke-width="1.800"/><path d="M12 8.500l3-4M12 3v1.500M7 8.500h1.500M15.500 8.500H17" stroke="#8d4a1f" stroke-width="1.300"/><path d="M2 22l3-2 4 2 3-2 3 2 3-2 4 2" fill="none" stroke="#17405c" stroke-width="1.600"/></symbol>
        <symbol id="i-help" viewBox="0 0 24 24"><circle cx="12" cy="12" r="10" fill="#5d8098" stroke="#2b4c63" stroke-width="1.600"/><path d="M8.500 9.500c0-5 7-4 7 0 0 2.500-3.500 2.500-3.500 5" fill="none" stroke="#fff" stroke-width="2.200"/><circle cx="12" cy="17.500" r="1.500" fill="#fff"/></symbol>
        <symbol id="i-pinmap" viewBox="0 0 24 24"><path d="M0 0h24v24H0z" fill="#fff"/><rect x="1.500" y="1.500" width="21" height="21" rx="2" fill="#8ec07c" stroke="#222" stroke-width="1.500"/><path d="M17 2.500h5v19h-5z" fill="#f5e02c"/><path d="M2.500 17H17v4.500H2.500z" fill="#f5e02c"/><path d="M9.500 11v9" stroke="#222" stroke-width="1.600"/><circle cx="9.500" cy="8" r="4" fill="#e02020"/><circle cx="8.500" cy="7" r="1.200" fill="#ffb0a0"/></symbol>

        <symbol id="i-p1" viewBox="0 0 24 24"><path d="M2 15l5-2 5 1 5-4 5-4v17H2z" fill="#a8c85c"/><path d="M2 11h20M2 15h20M2 19h20" stroke="#1d4a3f" stroke-width="1.200" stroke-dasharray="3 1"/><path d="M4 3l14 1" stroke="#17405c" stroke-width="1.500"/><circle cx="4" cy="3" r="2" fill="#17405c"/><circle cx="18" cy="4" r="2" fill="#17405c"/></symbol>
        <symbol id="i-p2" viewBox="0 0 24 24"><path d="M2 22l3-9h5l5-11 7 20z" fill="#a8c85c"/><path d="M1 10.500h22" stroke="#17405c" stroke-width="1.600" stroke-dasharray="3 1"/><path d="M6 11h7l-4 6z" fill="#ef7a2c"/></symbol>
        <symbol id="i-p3" viewBox="0 0 24 24"><path d="M2 2h20v20H2z" fill="#fdd98c"/><path d="M3 12h19M4 2v20" stroke="#17405c" stroke-width="1.600" stroke-dasharray="3 1"/><path d="M4 16c3 2 4-11 7-11s3 9 5 9 3-2 5-4" fill="none" stroke="#e5742e" stroke-width="1.700"/></symbol>
        <symbol id="i-p4" viewBox="0 0 24 24"><path d="M5 2h16v12H5z" fill="#fdd98c"/><path d="M3 9h19M3 1v20" stroke="#17405c" stroke-dasharray="2 1"/><path d="M4 11c3 0 4-6 7-6s3 5 9 4" fill="none" stroke="#e5742e" stroke-width="1.300"/><path d="M7 18l6-5v3h8v4h-8v3z" fill="#6c80a8"/></symbol>
        <symbol id="i-p5" viewBox="0 0 24 24"><path d="M5 2h16v12H5z" fill="#fdd98c"/><path d="M3 9h19M3 1v20" stroke="#17405c" stroke-dasharray="2 1"/><path d="M4 11c3 0 4-6 7-6s3 5 9 4" fill="none" stroke="#e5742e" stroke-width="1.300"/><path d="M21 18l-6-5v3H7v4h8v3z" fill="#6c80a8"/></symbol>
        <symbol id="i-cls1" viewBox="0 0 24 24"><g fill="#dbe6ee" stroke="#2b4c63" stroke-width="1.300" stroke-dasharray="2 1"><circle cx="5.500" cy="7" r="3.500"/><circle cx="17" cy="4.500" r="3.500"/><circle cx="5" cy="19" r="3.500"/></g><g fill="#17405c"><circle cx="5.500" cy="7" r="1.200"/><circle cx="17" cy="4.500" r="1.200"/><circle cx="5" cy="19" r="1.200"/></g><path d="M9 9c0 3 2 5 4 4l7 8 2-2-7-8c0-2-1-4-3-4l1 3-2 1z" fill="url(#g-steel)" stroke="#173a54"/></symbol>
        <symbol id="i-cls2" viewBox="0 0 24 24"><g fill="#dbe6ee" stroke="#2b4c63" stroke-width="1.300" stroke-dasharray="2 1"><circle cx="5.500" cy="7" r="3.500"/><circle cx="17" cy="5" r="3.500"/><circle cx="11" cy="19" r="3.500"/></g><g fill="#17405c"><circle cx="5.500" cy="7" r="1.200"/><circle cx="17" cy="5" r="1.200"/><circle cx="11" cy="19" r="1.200"/></g><path d="M2 2l20 20M22 2L2 22" stroke="#d0202c" stroke-width="1.700"/></symbol>
        <symbol id="i-over" viewBox="0 0 10 34"><path d="M2 25h6" stroke="#fff" stroke-width="2"/><path d="M1.500 27.500h7L5 32z" fill="#fff"/><path d="M1 27h6l-3 4z" fill="#6b6f7a"/></symbol>
        <symbol id="i-over2" viewBox="0 0 10 34"><path d="M1 6l2.500 2L1 10M5 6l2.500 2L5 10" fill="none" stroke="#fff" stroke-width="1.500"/><path d="M2 25h6" stroke="#fff" stroke-width="2"/><path d="M1.500 27.500h7L5 32z" fill="#fff"/><path d="M1 27h6l-3 4z" fill="#6b6f7a"/></symbol>

        <symbol id="l-pts" viewBox="0 0 14 14"><path d="M.5.5h13v13H.5z" fill="#ffffb0" stroke="#4c8a0a" stroke-width="1.400"/><path d="M3 4h2M9 4h2M6 7h2M3 10h2M9 10h2M6 3h1M11 7h1" stroke="#111" stroke-width="2"/></symbol>
        <symbol id="l-grid" viewBox="0 0 14 14"><path d="M.5.5h13v13H.5z" fill="#f4ff8c" stroke="#6aa80a" stroke-width="1.600"/><path d="M2 12V8l2-2 2 2 2-3 2 3 2-1v5z" fill="#2f8a1c"/><path d="M2 9l2-3 2 3 2-4 2 4 2-2" fill="none" stroke="#d03030" stroke-width="1.500"/></symbol>

        <symbol id="w-start" viewBox="0 0 24 24"><path d="M4 6.500l6.800-1V11.500H4zM11.800 5.300L20 4v7.500h-8.200zM4 12.500h6.800v6l-6.800-1zM11.800 12.500H20V20l-8.200-1.200z" fill="#fff"/></symbol>
        <symbol id="w-ring" viewBox="0 0 24 24"><circle cx="12" cy="12" r="9" fill="none" stroke="#f4f4f4" stroke-width="2.600"/></symbol>
        <symbol id="w-mic" viewBox="0 0 24 24"><path d="M9.500 4h5v10h-5zM7 11v6h10v-6M12 17v4M9 20.500h6" fill="none" stroke="#a5a5a5" stroke-width="1.200"/></symbol>
        <symbol id="w-task" viewBox="0 0 24 24"><path d="M6.500 5.500h11v13h-11zM5 7.500H2.500v9H5M19 7.500h2.500v9H19" fill="none" stroke="#fff" stroke-width="1.200"/></symbol>
        <symbol id="w-edge" viewBox="0 0 24 24"><path d="M2 11C3-1 21-2 22 11v3H8.500c0 5 7 6 12 3v4C12 26 3 22 5 14c1-3 3-5 5-6-1 1-1.500 2-1.500 3H15c0-5-8-6-13 0z" fill="#0b7bdc"/></symbol>
        <symbol id="w-explorer" viewBox="0 0 24 24"><path d="M1 21V4l2-1h6l2 2h12v16z" fill="#fde08c"/><path d="M1 6h22" stroke="#e8bd4c" stroke-width="2"/><path d="M5 21v-9h14v9h-4v-4H9v4z" fill="#3ea9dc"/></symbol>
        <symbol id="w-pc" viewBox="0 0 24 24"><path d="M1 1l18 2 1 14-16-1z" fill="#dfe8f2"/><path d="M2.500 2.500l15 1.500 1 11-13-1z" fill="url(#g-screen)"/><path d="M6 19l8-2 4 4-8 2z" fill="#cfd3d8"/><circle cx="18" cy="18.500" r="5" fill="#e9eef0" stroke="#8ba08c"/><path d="M15.500 17l2 1.500-2 1.500M20.500 16l-2 1.500 2 1.500" fill="none" stroke="#2c8a2c" stroke-width="1.300"/></symbol>
        <symbol id="w-apps" viewBox="0 0 24 24"><rect x="1" y="1" width="22" height="22" rx="2" fill="#f4f4f2"/><path d="M6 6h3v3H6zM10.500 6h3v3h-3zM15 6h3v3h-3z" fill="#e0402c"/><path d="M6 10.500h3v3H6z" fill="#2ca04c"/><path d="M10.500 10.500h3v3h-3z" fill="#2c7ce0"/><path d="M15 10.500h3v3h-3zM10.500 15h3v3h-3zM15 15h3v3h-3z" fill="#f0b020"/><path d="M6 15h3v3H6z" fill="#2ca04c"/></symbol>
        <symbol id="w-chrome" viewBox="0 0 24 24"><circle cx="12" cy="12" r="11" fill="#fbc62c"/><path d="M12 12L2.500 6.500C7-1 18-1 21.800 7z" fill="#dc4a3c"/><path d="M12 12L2.500 6.500C-1 13 3 22 11.500 23l5-8z" fill="#2ca05a"/><path d="M12 7h9.800" stroke="#dc4a3c" stroke-width="2"/><circle cx="12" cy="12" r="5.200" fill="#fff"/><circle cx="12" cy="12" r="4.200" fill="#4a86ea"/></symbol>
        <symbol id="w-firefox" viewBox="0 0 24 24"><circle cx="12" cy="12" r="11" fill="#f07a1c"/><circle cx="12.500" cy="10" r="9" fill="#1c6cb8"/><path d="M10 2c5-2 10 2 10 7-2-3-5-5-9-4z" fill="#4fb4e8"/><path d="M1.500 5l3 1 3-1-1 4 5 0 1 2-3 2c1 4 8 3 9-1 1-4 0-6-1-9 6 3 7 12 3 16-5 5-14 4-17-1-3-4-3-9-2-13z" fill="#f0701c"/><path d="M18 4c6 4 6 13 0 17 3-5 3-11 0-17z" fill="#fbc02c"/></symbol>
        <symbol id="w-earth" viewBox="0 0 24 24"><circle cx="12" cy="12" r="11" fill="#3f74d8"/><path d="M2 6c7-2 10 6 20 6M1 11c8-2 10 8 21 6M2 17c6-1 8 4 13 5" fill="none" stroke="#e4ecfb" stroke-width="2.600"/></symbol>
        <symbol id="w-earthpro" viewBox="0 0 24 24"><circle cx="12" cy="11" r="10.500" fill="url(#g-silver)"/><path d="M3 5c7-1 12 7 19 4M2 11c7-1 11 6 20 4" fill="none" stroke="#7b7b7b" stroke-width="2.200"/><path d="M5 17h14v6H5z" fill="#333"/><text x="12" y="22" class="t-pro">PRO</text></symbol>
        <symbol id="w-store" viewBox="0 0 24 24"><path d="M2 6l21-1v18L2 20z" fill="#fff"/><path d="M7 6c0-7 8-7 8 0" fill="none" stroke="#fff" stroke-width="1.600"/><path d="M6 10l5-.5v4H6zM12 9.300l5-.6v4.800h-5zM6 14.500h5v4L6 18zM12 14.500h5v5l-5-.7z" fill="#001008"/></symbol>
        <symbol id="w-pcc" viewBox="0 0 24 24"><path d="M.7.700h22.600v22.600H.7z" fill="#0a5a96" stroke="#dfeaf4" stroke-width="1.200"/><text x="8" y="13" class="t-pc">P</text><text x="16" y="21" class="t-pc">C</text></symbol>
        <symbol id="w-gauge" viewBox="0 0 24 24"><circle cx="12" cy="12" r="11" fill="url(#g-silver)"/><circle cx="12" cy="12" r="7.500" fill="#f4efe6" stroke="#999"/><path d="M8 6l7 11" stroke="#c0392b" stroke-width="1.800"/><path d="M12 12l3-6" stroke="#777"/></symbol>
        <symbol id="w-sketch" viewBox="0 0 24 24"><path d="M2 4l14-3 6 5v12L9 23 5 20z" fill="#e02222"/><path d="M6 7l9-3 3 3-9 3M9 12l8-3v3l-5 2v3" fill="none" stroke="#fff" stroke-width="1.800"/><path d="M9 23l-4-3-3-16 5 4z" fill="#b01414"/></symbol>
        <symbol id="w-eye" viewBox="0 0 24 24"><path d="M2 2h20v20H2z" fill="url(#g-red)"/><path d="M12 0l12 12-12 12L0 12z" fill="#f0c08a"/><path d="M3 12c4-6 14-6 18 0-4 5-14 5-18 0z" fill="#fff" stroke="#5a2e11"/><circle cx="12" cy="11.500" r="3.800" fill="#2c74c8"/><circle cx="12" cy="11.500" r="1.800" fill="#111"/></symbol>
        <symbol id="w-ie" viewBox="0 0 24 24"><path d="M12 3a9.500 9.500 0 1 0 9 13h-5c-3 4-8 2-8-2h14C23 8 18 3 12 3zM8 11c1-4 8-4 8.500 0z" fill="#4fb8f0"/><path d="M2 23C-2 19 12 2 20 1c3 0 3 2 2 4" fill="none" stroke="#f4c62c" stroke-width="1.900"/></symbol>
        <symbol id="w-maze" viewBox="0 0 24 24"><path d="M1 1h8v3H1zM15 1h8v3h-8z" fill="#e01020"/><path d="M1 6h6v3H1zM17 6h6v3h-6z" fill="#c01060"/><path d="M1 11h4v3H1zM19 11h4v3h-4z" fill="#7a20b0"/><path d="M2 16l10 8 10-8-5-2-5 5-5-5z" fill="#2030d0"/><path d="M12 3l5 9-5 7-5-7z" fill="#f030a0"/><path d="M8 10h8M9 14h6" stroke="#f8e040" stroke-width="1.600"/></symbol>
        <symbol id="w-qt" viewBox="0 0 24 24"><rect x="1" y="1" width="22" height="22" rx="2" fill="#a44cb0" stroke="#d9a8e0"/><text x="12" y="13" class="t-qt">QT</text><text x="12" y="20" class="t-mod">Modeler</text></symbol>
        <symbol id="w-chev" viewBox="0 0 24 24"><path d="M6 15l6-6 6 6" fill="none" stroke="#fff" stroke-width="1.300"/></symbol>
        <symbol id="w-batt" viewBox="0 0 24 24"><path d="M8 7.500h12v9H9M20 10h2v4h-2" fill="none" stroke="#fff" stroke-width="1.200"/><path d="M10 9.500h8.500v5.500H10z" fill="#fff"/><path d="M3 9h6v3c0 2-6 2-6 0zM4.500 6v3M7.500 6v3M6 13v4h4" fill="none" stroke="#fff" stroke-width="1.200"/></symbol>
        <symbol id="w-pen" viewBox="0 0 24 24"><path d="M10 15l6-11c2-1 4 1 3 3l-7 9zM3 19c0-6 7-5 6 0s-5 0 3-3 6-4 8-3" fill="none" stroke="#fff" stroke-width="1.300"/></symbol>
        <symbol id="w-keyb" viewBox="0 0 24 24"><path d="M1 6h22v12.500H1z" fill="none" stroke="#fff" stroke-width="1.200"/><path d="M4 9.500h16M4 12.500h16" stroke="#fff" stroke-width="1.300" stroke-dasharray="1.500 1.500"/><path d="M7 15.500h10" stroke="#fff" stroke-width="1.200"/></symbol>
        <symbol id="w-note" viewBox="0 0 24 24"><path d="M3 3h17v15h-9l-4 4v-4H3z" fill="#fff"/><path d="M6 7h11M6 10.500h11M6 14h7" stroke="#001008" stroke-width="1.300"/></symbol>
    </svg>

    <!-- Title bar -->
    <header class="title-bar">
        <svg class="logo"><use href="#i-logo"/></svg>
        <h1>Global Mapper v18.1 (b022117) [64-bit] [+Lidar] - REGISTERED</h1>
        <div class="win-buttons">
            <button aria-label="Minimize"><svg viewBox="0 0 10 10"><path d="M0 5.500h10"/></svg></button>
            <button aria-label="Restore"><svg viewBox="0 0 10 10"><path d="M.5 2.500h7v7h-7zM2.500 2.500v-2h7v7h-2"/></svg></button>
            <button aria-label="Close"><svg viewBox="0 0 10 10"><path d="M0 0l10 10M10 0L0 10"/></svg></button>
        </div>
    </header>

    <!-- Menu -->
    <nav class="menu">
        <span class="grip"></span>
        <button>File</button>
        <button>Edit</button>
        <button>View</button>
        <button>Tools</button>
        <button>Analysis</button>
        <button>Layer</button>
        <button>Search</button>
        <button>GPS</button>
        <button>Help</button>
    </nav>

    <!-- Toolbars -->
    <div class="toolbars">
        <div class="bar-row">
            <div class="bar">
                <span class="grip"></span>
                <button class="tool" aria-label="Open"><svg><use href="#i-folder"/></svg></button>
                <button class="tool" aria-label="Online data"><svg><use href="#i-globe"/></svg></button>
                <button class="tool" aria-label="Save"><svg><use href="#i-save"/></svg></button>
                <button class="tool" aria-label="Map layout"><svg><use href="#i-window"/></svg></button>
                <button class="tool" aria-label="Configure"><svg><use href="#i-wrench"/></svg></button>
                <button class="tool on" aria-label="Control Center"><svg><use href="#i-layers"/></svg></button>
                <button class="over" aria-label="More"><svg><use href="#i-over"/></svg></button>
            </div>
            <div class="bar">
                <span class="grip"></span>
                <button class="tool on" aria-label="Zoom tool"><svg><use href="#i-zoomsel"/></svg></button>
                <button class="tool" aria-label="Pan"><svg><use href="#i-hand"/></svg></button>
                <button class="tool" aria-label="Zoom in"><svg><use href="#i-zoomin"/></svg></button>
                <button class="tool" aria-label="Zoom out"><svg><use href="#i-zoomout"/></svg></button>
                <button class="tool" aria-label="Last view"><svg><use href="#i-back"/></svg></button>
                <button class="tool" aria-label="Full view"><svg><use href="#i-home"/></svg></button>
                <button class="over" aria-label="More"><svg><use href="#i-over"/></svg></button>
            </div>
            <div class="bar">
                <span class="grip"></span>
                <button class="tool" aria-label="Digitizer"><svg><use href="#i-pencil"/></svg></button>
                <button class="tool" aria-label="Select area"><svg><use href="#i-poly"/></svg></button>
                <button class="tool" aria-label="Clear selection"><svg><use href="#i-delete"/></svg></button>
                <button class="over" aria-label="More"><svg><use href="#i-over"/></svg></button>
            </div>
            <div class="bar">
                <span class="grip"></span>
                <button class="tool" aria-label="Measure"><svg><use href="#i-ruler"/></svg></button>
                <button class="tool" aria-label="Feature info"><svg><use href="#i-info"/></svg></button>
                <button class="tool" aria-label="Search"><svg><use href="#i-find"/></svg></button>
                <button class="over" aria-label="More"><svg><use href="#i-over"/></svg></button>
            </div>
            <div class="bar">
                <span class="grip"></span>
                <button class="tool" aria-label="Elevation grid"><svg><use href="#i-mt1"/></svg></button>
                <button class="tool" aria-label="Contours"><svg><use href="#i-mt2"/></svg></button>
                <button class="tool" aria-label="Cut and fill"><svg><use href="#i-mt3"/></svg></button>
                <button class="tool" aria-label="Flatten"><svg><use href="#i-mt4"/></svg></button>
                <button class="tool" aria-label="View shed"><svg><use href="#i-mt5"/></svg></button>
                <button class="tool" aria-label="Watershed"><svg><use href="#i-mt6"/></svg></button>
                <button class="tool" aria-label="Combine terrain"><svg><use href="#i-mt7"/></svg></button>
                <button class="tool" aria-label="Density grid"><svg><use href="#i-mt8"/></svg></button>
                <button class="tool" aria-label="Fly-through"><svg><use href="#i-plane"/></svg></button>
                <button class="over" aria-label="More"><svg><use href="#i-over"/></svg></button>
            </div>
        </div>

        <div class="bar-row">
            <div class="bar bar-viewer">
                <span class="grip"></span>
                <button class="tool" aria-label="Dock windows"><svg><use href="#i-panes"/></svg></button>
                <button class="tool" aria-label="Fly to"><svg><use href="#i-nav"/></svg></button>
                <button class="tool" aria-label="Swipe"><svg><use href="#i-split"/></svg></button>
                <button class="tool" aria-label="3D view"><svg><use href="#i-3d"/></svg></button>
                <button class="tool on" aria-label="Link 2D and 3D"><svg><use href="#i-2d3d"/></svg></button>
                <button class="tool" aria-label="Water level"><svg><use href="#i-water1"/></svg></button>
                <button class="tool" aria-label="Lower water"><svg><use href="#i-water2"/></svg></button>
                <button class="tool" aria-label="Raise water"><svg><use href="#i-water3"/></svg></button>
                <button class="tool on" aria-label="Hill shading"><svg><use href="#i-hills"/></svg></button>
                <button class="over" aria-label="More"><svg><use href="#i-over2"/></svg></button>
            </div>
            <div class="bar bar-favorites">
                <span class="grip"></span>
                <span class="combo"><select aria-label="Favorites"><option>Set up Favorites Shortcut Keys...</option></select></span>
                <button class="over" aria-label="More"><svg><use href="#i-over2"/></svg></button>
            </div>
            <div class="bar">
                <span class="grip"></span>
                <button class="tool" aria-label="Create points"><svg><use href="#i-pts"/></svg></button>
                <button class="tool" aria-label="Create line"><svg><use href="#i-line"/></svg></button>
                <button class="tool" aria-label="Freehand line"><svg><use href="#i-free"/></svg></button>
                <button class="tool" aria-label="Create area"><svg><use href="#i-area"/></svg></button>
                <button class="tool" aria-label="Create rectangle"><svg><use href="#i-rect"/></svg></button>
                <button class="tool" aria-label="Create circle"><svg><use href="#i-circ"/></svg></button>
                <button class="over" aria-label="More"><svg><use href="#i-over"/></svg></button>
            </div>
        </div>

        <div class="bar-row">
            <div class="bar">
                <span class="grip"></span>
                <button class="tool" aria-label="Distance and bearing"><svg><use href="#i-angle"/></svg></button>
                <button class="tool" aria-label="Range rings"><svg><use href="#i-rings"/></svg></button>
                <button class="tool" aria-label="Create grid"><svg><use href="#i-cgrid"/></svg></button>
                <button class="tool" aria-label="COGO"><svg><use href="#i-cogo"/></svg></button>
                <button class="tool" aria-label="Buffer"><svg><use href="#i-buffer"/></svg></button>
                <span class="sep"></span>
                <button class="tool off" aria-label="Finish edit" disabled><svg><use href="#i-checkp"/></svg></button>
                <button class="tool off" aria-label="Edit feature" disabled><svg><use href="#i-wrenchb"/></svg></button>
                <button class="over" aria-label="More"><svg><use href="#i-over"/></svg></button>
            </div>
            <div class="bar">
                <span class="grip"></span>
                <button class="tool off" aria-label="Move" disabled><svg><use href="#i-move"/></svg></button>
                <button class="tool off" aria-label="Rotate and scale" disabled><svg><use href="#i-scale"/></svg></button>
                <button class="tool" aria-label="Show vertices"><svg><use href="#i-vertex"/></svg></button>
                <button class="tool off" aria-label="Move vertex" disabled><svg><use href="#i-movev"/></svg></button>
                <button class="tool off" aria-label="Insert vertex" disabled><svg><use href="#i-addv"/></svg></button>
                <span class="sep"></span>
                <button class="tool off" aria-label="Add to end" disabled><svg><use href="#i-endv"/></svg></button>
                <button class="tool off" aria-label="Split line" disabled><svg><use href="#i-cut"/></svg></button>
                <button class="tool off" aria-label="Points to area" disabled><svg><use href="#i-join1"/></svg></button>
                <button class="tool off" aria-label="Line to area" disabled><svg><use href="#i-join2"/></svg></button>
                <button class="tool off" aria-label="Area to line" disabled><svg><use href="#i-join3"/></svg></button>
                <button class="tool off" aria-label="Copy areas" disabled><svg><use href="#i-copy2"/></svg></button>
                <button class="tool off" aria-label="Crop" disabled><svg><use href="#i-crop"/></svg></button>
                <button class="tool off" aria-label="Buffer line" disabled><svg><use href="#i-pill"/></svg></button>
                <button class="over" aria-label="More"><svg><use href="#i-over"/></svg></button>
            </div>
            <div class="bar bar-lidar">
                <span class="grip"></span>
                <span class="combo"><select aria-label="Lidar draw mode"><option>Color Lidar by Elevation</option></select></span>
                <button class="tool" aria-label="Classify noise"><svg><use href="#i-gear1"/></svg></button>
                <button class="tool" aria-label="Classify ground"><svg><use href="#i-gear2"/></svg></button>
                <button class="tool" aria-label="Classify buildings"><svg><use href="#i-gear3"/></svg></button>
                <button class="tool" aria-label="Extract features"><svg><use href="#i-slice"/></svg></button>
                <button class="tool" aria-label="Control points"><svg><use href="#i-tri"/></svg></button>
                <span class="sep"></span>
                <button class="tool" aria-label="Filter Lidar"><svg><use href="#i-filter"/></svg></button>
                <button class="over" aria-label="More"><svg><use href="#i-over2"/></svg></button>
            </div>
        </div>

        <div class="bar-row">
            <div class="bar">
                <span class="grip"></span>
                <button class="tool" aria-label="Ground"><svg><use href="#i-ground"/></svg></button>
                <button class="tool" aria-label="Low vegetation"><svg><use href="#i-grass"/></svg></button>
                <button class="tool" aria-label="Medium vegetation"><svg><use href="#i-bush"/></svg></button>
                <button class="tool" aria-label="High vegetation"><svg><use href="#i-tree"/></svg></button>
                <button class="tool" aria-label="Building"><svg><use href="#i-bldg"/></svg></button>
                <button class="tool" aria-label="Powerline"><svg><use href="#i-power"/></svg></button>
                <button class="tool" aria-label="Water"><svg><use href="#i-drop"/></svg></button>
                <button class="tool" aria-label="Noise"><svg><use href="#i-noise"/></svg></button>
                <button class="tool" aria-label="Key points"><svg><use href="#i-key"/></svg></button>
                <button class="over" aria-label="More"><svg><use href="#i-over"/></svg></button>
            </div>
            <div class="bar">
                <span class="grip"></span>
                <button class="tool" aria-label="Bridge"><svg><use href="#i-bridge"/></svg></button>
                <button class="tool" aria-label="Bridge ID"><svg><use href="#i-bridgeid"/></svg></button>
                <button class="tool" aria-label="Mark cell"><svg><use href="#i-redsel"/></svg></button>
                <button class="tool" aria-label="Merge cells"><svg><use href="#i-greensq"/></svg></button>
                <button class="tool" aria-label="Undo"><svg><use href="#i-undo"/></svg></button>
            </div>
            <div class="bar">
                <span class="grip"></span>
                <button class="tool" aria-label="Add node"><svg><use href="#i-nodes"/></svg></button>
                <button class="tool" aria-label="Load folder"><svg><use href="#i-folders"/></svg></button>
                <button class="tool" aria-label="Storm"><svg><use href="#i-storm"/></svg></button>
                <button class="tool" aria-label="Gauge"><svg><use href="#i-gauge"/></svg></button>
                <button class="tool" aria-label="Help"><svg><use href="#i-help"/></svg></button>
            </div>
            <div class="bar">
                <span class="grip"></span>
                <button class="tool" aria-label="Map pin"><svg><use href="#i-pinmap"/></svg></button>
            </div>
        </div>
    </div>

    <main class="workspace">
        <!-- Control Center -->
        <aside class="control-center">
            <div class="panel-head">
                <h2>Control Center (3 Layers, 1 Selec...</h2>
                <button aria-label="Close panel"><svg viewBox="0 0 10 10"><path d="M1 1l8 8M9 1L1 9"/></svg></button>
            </div>
            <div class="tree">
                <div class="tree-row root">
                    <button class="expander" aria-label="Collapse"></button>
                    <input type="checkbox" id="ws" class="mixed" checked>
                    <label for="ws">Current Workspace</label>
                </div>
                <ul>
                    <li class="tree-row selected"><input type="checkbox" id="l1"><svg><use href="#l-pts"/></svg><label for="l1">2014-color.laz [727,807</label></li>
                    <li class="tree-row"><input type="checkbox" id="l2"><svg><use href="#l-grid"/></svg><label for="l2">Elevation Grid 1</label></li>
                    <li class="tree-row"><input type="checkbox" id="l3" checked><svg><use href="#l-grid"/></svg><label for="l3">Elevation Grid 2</label></li>
                </ul>
            </div>
            <div class="hscroll">
                <button aria-label="Scroll left"><svg viewBox="0 0 10 10"><path d="M7 1L3 5l4 4"/></svg></button>
                <div class="track"><div class="thumb"></div></div>
                <button aria-label="Scroll right"><svg viewBox="0 0 10 10"><path d="M3 1l4 4-4 4"/></svg></button>
            </div>
        </aside>

        <div class="views">
            <!-- Map view -->
            <section class="map-view">
                <div class="legend-box"></div>
                <svg class="scale-bar" viewBox="1 1 432 60">
                    <path d="M34 18h369M35 8v20M96 8v20M157 8v20M218 8v20M279 8v20M340 8v20M402 8v20" fill="none" stroke="#000" stroke-width="2"/>
                    <g text-anchor="middle">
                        <text x="35" y="52">0 m</text>
                        <text x="158" y="52">500 m</text>
                        <text x="280" y="52">1000 m</text>
                        <text x="403" y="52">1500 m</text>
                    </g>
                </svg>
                <div class="cloud">
                    <canvas id="cloud" width="75" height="98"></canvas>
                    <svg viewBox="0 0 75 98">
                        <path d="M25 55l-7 35" stroke="#ff0" stroke-width="5" stroke-linecap="round"/>
                        <path d="M25 56l-7 33" stroke="#000" stroke-width="1.500" stroke-dasharray="5 2"/>
                        <path d="M14 61l5 5M28 61l-5 5M14 74l5-5M28 74l-5-5" stroke="#fff" stroke-width="4"/>
                        <path d="M14 61l5 5M28 61l-5 5M14 74l5-5M28 74l-5-5M20 67h2" stroke="#d01818" stroke-width="2"/>
                    </svg>
                </div>
            </section>

            <!-- Path profile -->
            <section class="profile">
                <div class="bar-row">
                    <div class="bar">
                        <span class="grip"></span>
                        <span class="combo combo-mode"><select aria-label="Profile mode"><option>Click or Drag to Select and Edit Lidar Points</option></select></span>
                        <button class="tool" aria-label="Profile path"><svg><use href="#i-p1"/></svg></button>
                        <button class="tool" aria-label="Cut and fill volumes"><svg><use href="#i-p2"/></svg></button>
                        <button class="tool" aria-label="Dock profile"><svg><use href="#i-panes"/></svg></button>
                        <button class="tool" aria-label="Profile options"><svg><use href="#i-wrench"/></svg></button>
                        <span class="sep"></span>
                        <button class="tool" aria-label="Perpendicular profile"><svg><use href="#i-p3"/></svg></button>
                        <button class="tool off" aria-label="Previous profile" disabled><svg><use href="#i-p4"/></svg></button>
                        <button class="tool off" aria-label="Next profile" disabled><svg><use href="#i-p5"/></svg></button>
                    </div>
                    <div class="bar">
                        <span class="grip"></span>
                        <button class="tool" aria-label="Ground"><svg><use href="#i-ground"/></svg></button>
                        <button class="tool" aria-label="Low vegetation"><svg><use href="#i-grass"/></svg></button>
                        <button class="tool" aria-label="Medium vegetation"><svg><use href="#i-bush"/></svg></button>
                        <button class="tool" aria-label="High vegetation"><svg><use href="#i-tree"/></svg></button>
                        <button class="tool" aria-label="Building"><svg><use href="#i-bldg"/></svg></button>
                        <button class="tool" aria-label="Powerline"><svg><use href="#i-power"/></svg></button>
                        <button class="tool" aria-label="Water"><svg><use href="#i-drop"/></svg></button>
                        <button class="tool" aria-label="Noise"><svg><use href="#i-noise"/></svg></button>
                        <button class="tool" aria-label="Key points"><svg><use href="#i-key"/></svg></button>
                        <span class="combo combo-setting"><select aria-label="Draw setting"><option>Use Global Setting from Toolbar</option></select></span>
                        <button class="tool" aria-label="Classify selected"><svg><use href="#i-cls1"/></svg></button>
                        <button class="tool" aria-label="Delete selected"><svg><use href="#i-cls2"/></svg></button>
                        <button class="tool" aria-label="Filter Lidar"><svg><use href="#i-filter"/></svg></button>
                    </div>
                </div>

                <svg class="chart" viewBox="207 336 1388 500">
                    <!-- terrain -->
                    <path class="terrain" d="M252.500 807V564L256 561 258.500 558 263.500 552 265.500 548 270 542.500 271.500 540 276 535 279.500 529 281.500 527 282.500 522 283.500 528 285.500 541.500 288 558 290 566 296.500 567 303.500 567.500 307.500 570 311.500 566 314 558 315.500 543 316.500 534 328.500 534 340 537 341.500 543 343.500 569 344.500 550 346 503 347 445 349.500 449 351.500 427 353 432 354.500 417 355.500 424 356.500 473 358 520 359.500 553 361.500 520 362.500 463 363.500 438 365 460 367.500 437 370.500 445 371.500 418 378.500 417 386.500 417 393.500 419 395.500 427 397 460 399 503 401 530 402.500 561 404.500 517 406.500 489 408.500 497 409.500 523 411 463 414 445 418.500 440 421.500 438 425 435 428.500 436 430 453 431.500 437 432.500 460 435 490 436.500 523 438 557 439.500 586 441 553 443.500 502 445.500 523 447 563 448.500 591 453.500 591 456 580 458 553 460.500 531 462 550 464.500 570 465.500 530 466.500 499 468.500 496 470 513 472.500 508 473.500 507 474.500 524 477.500 488 479.500 517 481.500 563 483.500 601 485.500 557 487.500 510 489.500 481 491.500 497 494.500 517 495.500 491 496.500 520 498.500 563 499.500 588 500.500 575 502.500 586 504.500 560 507 544 509.500 563 512 593 513.500 609 521.500 608 523.500 605 524.500 577 526.500 545 528.500 563 530.500 611 531.500 547 533.500 486 535.500 527 537.500 577 539 604 541 570 543.500 523 546.500 568 547.500 537 549.500 504 552 527 553.500 520 555.500 483 557.500 475 558.500 530 559.500 576 561 517 562.500 477 564 469 568 465 570.500 464 571.500 497 572.500 533 575 543 576.500 566 579 550 580.500 539 582.500 550 586.500 558 590 557 591.500 570 596 588 598 614 605 614.500 654.500 615.500 725 616 742.500 617.500 766.500 619.500 787 622.500 801 626 808 628.500 832 629 844 630 845 620 847 597 848.500 602 850 598 853 615 854.500 587 855 550 856 534 858.500 553 860 549 861.500 556 864.500 547 866 520 868 517 870.500 511 877 505 883.500 498.500 884.500 502 887 500.500 894 502.500 904.500 509 914.500 515 928.500 523 938 523 941.500 520 943 523 945.500 547 950 574 957.500 571 980 572 985 570 986.500 577 990.500 600 994.500 633 998 657 1000 667 1014.500 669 1037 669 1044 666 1048.500 662 1059 667 1069 670 1071.500 661 1075 667 1078.500 674 1083.500 671 1087.500 677 1099.500 679 1111.500 683 1114.500 663 1117 637 1120.500 613 1122 630 1125.500 673 1128 662 1130 646 1133 662 1137.500 672 1141 686 1142.500 660 1143.500 637 1147 643 1149.500 663 1152 681 1154.500 670 1158 653 1160.500 673 1162.500 681 1166 677 1169 660 1171 668 1173.500 660 1176 637 1177.500 619 1180.500 640 1183 667 1184.500 685 1187.500 660 1190.500 633 1193 647 1195 665 1198 682 1200 665 1203 646 1207 649 1211.500 657 1218.500 664 1222 660 1225.500 663 1228.500 658 1235.500 666 1244 668 1247.500 680 1249.500 692 1253 684 1258 688 1268.500 694 1273.500 696 1289 708 1297.500 718 1306 726 1310.500 733 1318 740 1334.500 741 1343.500 752 1356 756 1382 759 1385.500 760 1404.500 761 1439 769 1452 770 1454.500 771.500 1589.500 771.500V807z"/>
                    <!-- grid lines and ticks -->
                    <path class="grid" d="M252 383.500h1338M252 460.500h1338M252 538.500h1338M252 616.500h1338M252 694.500h1338M252 772.500h1338"/>
                    <path class="axis" d="M252 807.500h1338M252.500 807v6M496.500 807v6M740.500 807v6M984.500 807v6M1227.500 807v6M1470.500 807v6M1589.500 807v6"/>
                    <!-- labels -->
                    <g class="labels">
                        <text x="208" y="352" class="pos">From Pos: 1056942.15, 2707971.92</text>
                        <g text-anchor="end">
                            <text x="1594" y="352" class="pos">To Pos: 1056847.96, 2707531.87</text>
                            <text x="246" y="389">25 m</text>
                            <text x="246" y="466">20 m</text>
                            <text x="246" y="544">15 m</text>
                            <text x="246" y="622">10 m</text>
                            <text x="243" y="700">5 m</text>
                            <text x="243" y="778">0 m</text>
                            <text x="1589" y="830">137 m</text>
                        </g>
                        <g text-anchor="middle">
                            <text x="902" y="373">Minimum Clearance: -8.4 m at 1056933.13, 2707929.77</text>
                            <text x="497" y="830">25 m</text>
                            <text x="740" y="830">50 m</text>
                            <text x="984" y="830">75 m</text>
                            <text x="1228" y="830">100 m</text>
                            <text x="1471" y="830">125 m</text>
                        </g>
                    </g>
                    <g class="location">
                        <text x="756" y="417">Location: 1056906.57, 2707805.71</text>
                        <text x="756" y="436">Elev: 19.966 m, Dist: 51.809 m</text>
                    </g>
                    <!-- line of sight -->
                    <path d="M252.500 523v42M1589.500 743v29" stroke="#000" stroke-width="3" stroke-dasharray="8 6"/>
                    <path d="M252 523.500L1590 743.500" stroke="#ff0" stroke-width="3"/>
                    <path d="M252 523.500L1590 743.500" stroke="#000" stroke-width="1.200" stroke-dasharray="8 2"/>
                    <path d="M380.500 412v132" stroke="#c01010" stroke-width="1.200" stroke-dasharray="14 3"/>
                    <circle cx="379.500" cy="412.500" r="4" fill="#f00"/>
                    <circle cx="379.500" cy="543.500" r="4" fill="#f00"/>
                    <!-- callout -->
                    <g class="callout">
                        <path d="M1161 438L1043 391.500M1165 508L963 620" fill="none" stroke="#cfcfcf" stroke-width="2.500"/>
                        <path d="M1024 384l26 4-5 4 0 7zM941.500 632l15-17 2 7 9 3z" fill="#cfcfcf"/>
                        <rect x="1165" y="439" width="210" height="72" fill="#ffffcc" stroke="#bfbfc6" stroke-width="2"/>
                    </g>
                    <g class="callout-text" text-anchor="middle">
                        <text x="1270" y="461">The Line of Sight needs a</text>
                        <text x="1270" y="479">Fully Open View Window</text>
                        <text x="1270" y="497">and this is a Building.</text>
                    </g>
                </svg>
            </section>
        </div>
    </main>

    <!-- Status bar -->
    <footer class="status">
        <span>1:15410</span>
        <span>SPCS ( NAD83_NSRS ) ( 1055219.47, 2705147.67 )</span>
        <span>41° 39' 41.9435" N, 70° 02' 22.4583" W</span>
    </footer>

    <!-- Taskbar -->
    <div class="taskbar">
        <button class="start" aria-label="Start"><svg><use href="#w-start"/></svg></button>
        <div class="search">
            <svg><use href="#w-ring"/></svg>
            <input type="text" placeholder="Ask me anything" aria-label="Search">
            <svg><use href="#w-mic"/></svg>
        </div>
        <button aria-label="Task view"><svg><use href="#w-task"/></svg></button>
        <button aria-label="Edge"><svg><use href="#w-edge"/></svg></button>
        <button class="open" aria-label="File Explorer"><svg><use href="#w-explorer"/></svg></button>
        <button aria-label="Remote desktop"><svg><use href="#w-pc"/></svg></button>
        <button aria-label="Apps"><svg><use href="#w-apps"/></svg></button>
        <button class="open" aria-label="Chrome"><svg><use href="#w-chrome"/></svg></button>
        <button aria-label="Firefox"><svg><use href="#w-firefox"/></svg></button>
        <button aria-label="Earth"><svg><use href="#w-earth"/></svg></button>
        <button aria-label="Earth Pro"><svg><use href="#w-earthpro"/></svg></button>
        <button aria-label="Store"><svg><use href="#w-store"/></svg></button>
        <button aria-label="PC"><svg><use href="#w-pcc"/></svg></button>
        <button aria-label="Compass"><svg><use href="#w-gauge"/></svg></button>
        <button aria-label="SketchUp"><svg><use href="#w-sketch"/></svg></button>
        <button class="open" aria-label="Image viewer"><svg><use href="#w-eye"/></svg></button>
        <button aria-label="Internet Explorer"><svg><use href="#w-ie"/></svg></button>
        <button aria-label="Terrain tool"><svg><use href="#w-maze"/></svg></button>
        <button aria-label="QT Modeler"><svg><use href="#w-qt"/></svg></button>
        <button class="active" aria-label="Global Mapper"><svg><use href="#i-logo"/></svg></button>
        <div class="tray">
            <button aria-label="Hidden icons"><svg><use href="#w-chev"/></svg></button>
            <button aria-label="Battery"><svg><use href="#w-batt"/></svg></button>
            <button aria-label="Pen"><svg><use href="#w-pen"/></svg></button>
            <button aria-label="Keyboard"><svg><use href="#w-keyb"/></svg></button>
            <div class="clock"><span>10:12 PM</span><span>3/31/2017</span></div>
            <button class="notes" aria-label="Notifications"><svg><use href="#w-note"/></svg><span class="badge">1</span></button>
        </div>
    </div>

    <script src="map.js"></script>
</body>
</html>
```
FILE: styles.css
```css
/* Global */
* { box-sizing: border-box; }
body {
    margin: 0;
    height: 100vh;
    display: flex;
    flex-direction: column;
    overflow: hidden;
    background: #cfd3dc;
    font-family: "Open Sans", "Noto Sans", sans-serif;
    font-size: 11px;
    color: #111;
}
h1, h2, ul { margin: 0; padding: 0; font-size: 11px; font-weight: normal; }
ul { list-style: none; }
button { padding: 0; border: 0; background: none; font: inherit; color: inherit; }
svg { display: block; }
.gradients { position: absolute; width: 0; height: 0; }
.sprite { display: none; }

/* Title bar */
.title-bar { display: flex; align-items: center; height: 23px; background: #fff; flex: none; }
.logo { width: 17px; height: 17px; margin: 0 4px 0 2px; }
.win-buttons { margin: 0 3px 0 auto; display: flex; }
.win-buttons button { width: 45px; height: 22px; display: flex; align-items: center; justify-content: center; }
.win-buttons svg { width: 10px; height: 10px; fill: none; stroke: #000; }

/* Menu */
.menu { display: flex; align-items: center; height: 32px; padding-bottom: 2px; flex: none; color: #44474f; }
.menu .grip { margin-right: 7px; }
.menu button { margin-right: 15px; }

/* Toolbars */
.toolbars { flex: none; }
.bar-row { display: flex; gap: 2px; height: 34px; }
.bar {
    display: flex;
    align-items: center;
    height: 34px;
    border-radius: 4px;
    border-bottom: 1px solid #a9adb8;
    background: linear-gradient(#edf0f8, #e3e7f0 50%, #cdd2dc);
}
.grip {
    width: 10px;
    height: 22px;
    flex: none;
    background: repeating-linear-gradient(#a3a7b1 0 2px, transparent 2px 5px) 4px 0 / 2px 22px no-repeat;
}
.tool {
    width: 30px;
    height: 31px;
    flex: none;
    display: flex;
    align-items: center;
    justify-content: center;
}
.tool svg { width: 22px; height: 22px; }
.tool.on {
    border: 1px solid #b9a26c;
    background: linear-gradient(#fbd9a4, #fcbc5c 45%, #ffe48c);
}
.tool.off svg { opacity: 0.5; }
.sep { width: 1px; height: 18px; margin: 0 3px 0 4px; background: #a9adb8; }
.over {
    width: 11px;
    height: 34px;
    flex: none;
    margin-left: 2px;
    border-radius: 0 5px 5px 0;
    background: #b1b5be;
}
.over svg { width: 10px; height: 34px; }
.bar-viewer { width: 432px; }
.bar-favorites { width: 353px; }
.bar-lidar { width: 441px; }
.bar-viewer .over, .bar-favorites .over, .bar-lidar .over { margin-left: auto; }

/* Drop-downs */
.combo { position: relative; height: 20px; margin: 0 2px; flex: none; }
.combo select {
    width: 100%;
    height: 20px;
    padding: 0 18px 0 3px;
    border: 1px solid #fff;
    border-radius: 0;
    appearance: none;
    background: #fff;
    font: inherit;
    color: #000;
}
.combo::before {
    content: "";
    position: absolute;
    top: 1px;
    right: 1px;
    bottom: 1px;
    width: 14px;
    background: #d9dde5;
    pointer-events: none;
}
.combo::after {
    content: "";
    position: absolute;
    top: 8px;
    right: 5px;
    border: 3px solid transparent;
    border-top: 4px solid #7b808b;
    pointer-events: none;
}
.bar-favorites .combo { width: 320px; }
.bar-lidar .combo { width: 213px; }
.combo-mode { width: 279px; margin: 0 3px 0 1px; }
.combo-setting { width: 196px; margin: 0 3px 0 0; }

/* Workspace */
.workspace { flex: 1; display: flex; gap: 5px; padding: 1px 0; min-height: 0; }
.control-center {
    width: 200px;
    flex: none;
    display: flex;
    flex-direction: column;
    border: 1px solid #9da1aa;
    border-top: 0;
    background: #fff;
}
.panel-head {
    display: flex;
    align-items: center;
    justify-content: space-between;
    height: 19px;
    padding: 0 5px 0 3px;
    background: #b9bec8;
    color: #44474f;
}
.panel-head h2 { white-space: nowrap; }
.panel-head svg { width: 9px; height: 9px; fill: none; stroke: #55585f; }

/* Layer tree */
.tree { flex: 1; overflow: hidden; }
.tree-row { position: relative; display: flex; align-items: center; height: 18px; white-space: nowrap; }
.tree-row.root { height: 19px; padding-left: 7px; }
.tree-row.root label { margin-left: 22px; }
.expander {
    width: 9px;
    height: 9px;
    margin-right: 7px;
    border: 1px solid #919191;
    background: linear-gradient(#3a5a9c, #3a5a9c) center / 5px 1px no-repeat #f7f7f7;
}
.tree input {
    width: 12px;
    height: 12px;
    margin: 0;
    flex: none;
    appearance: none;
    border: 1px solid #222;
    background: #fff;
}
.tree input:checked::after {
    content: "";
    display: block;
    width: 4px;
    height: 8px;
    margin-left: 3px;
    border: solid #111;
    border-width: 0 1px 1px 0;
    transform: rotate(40deg);
}
.tree input.mixed { background: #c4c4c4; }
.tree li { padding-left: 42px; }
.tree li::before {
    content: "";
    position: absolute;
    left: 30px;
    top: 0;
    width: 11px;
    height: 9px;
    border: dotted #999;
    border-width: 0 0 1px 1px;
}
.tree li:not(:last-child)::after {
    content: "";
    position: absolute;
    left: 30px;
    top: 9px;
    height: 9px;
    border-left: 1px dotted #999;
}
.tree li svg { width: 14px; height: 14px; margin: 0 4px 0 2px; flex: none; }
.tree li label { flex: 1; height: 18px; line-height: 17px; padding-left: 2px; overflow: hidden; }
.tree .selected label { background: #3399ff; color: #fff; }

/* Scroll bar */
.hscroll { display: flex; height: 16px; background: #f0f0f0; }
.hscroll button { width: 17px; display: flex; align-items: center; justify-content: center; }
.hscroll svg { width: 9px; height: 9px; fill: none; stroke: #444; stroke-width: 2; }
.track { flex: 1; }
.thumb { width: 80%; height: 100%; background: #cdcdcd; }

/* Map view */
.views { flex: 1; display: flex; flex-direction: column; min-width: 0; }
.map-view {
    position: relative;
    height: 104px;
    flex: none;
    padding: 1px;
    border-top: 1px solid #6b6b6b;
    border-left: 1px solid #6b6b6b;
    background: #fff;
}
.legend-box { width: 113px; height: 33px; border: 1px solid #000; border-width: 1px 2px 2px 1px; margin-bottom: 2px; }
.scale-bar { width: 435px; height: 63px; border: 1px solid #000; border-width: 1px 2px 2px 1px; }
.scale-bar text { font: 15px "Liberation Serif", serif; }
.cloud { position: absolute; left: 656px; top: 2px; width: 75px; height: 98px; }
.cloud svg { position: absolute; left: 0; top: 0; width: 75px; height: 98px; }

/* Path profile */
.profile {
    flex: 1;
    display: flex;
    flex-direction: column;
    min-height: 0;
    margin: 3px 4px 0 0;
    border-top: 2px solid #6b6b6b;
    border-left: 1px solid #6b6b6b;
}
.profile .bar-row { flex: none; gap: 2px; }
.chart {
    width: 100%;
    flex: 1;
    min-height: 0;
    margin-bottom: 4px;
    border: 1px solid #646464;
    background: #808080;
    box-shadow: 0 4px 0 #f4f4f4;
}
.terrain { fill: #00cc00; stroke: #80ffff; }
.grid { fill: none; stroke: #80f0f0; stroke-dasharray: 9 6 3 6; }
.axis { fill: none; stroke: #80ffff; }
.labels { fill: #80ffff; font: 15px "Liberation Serif", serif; }
.labels .pos { font-size: 16px; }
.location { fill: #f00; font: 15px "Liberation Serif", serif; }
.callout { filter: drop-shadow(2px 3px 2px rgba(0,0,0,0.5)); }
.callout-text { font: bold 15px "Liberation Sans", sans-serif; }

/* Small letters inside icons */
.t-3d { font: bold 9px "Liberation Sans", sans-serif; text-anchor: middle; fill: #17405c; }
.t-id { font: bold 9px "Liberation Sans", sans-serif; text-anchor: middle; fill: #e8341c; }
.t-pro { font: bold 6px "Liberation Sans", sans-serif; text-anchor: middle; fill: #ddd; }
.t-pc { font: italic bold 14px "Liberation Sans", sans-serif; text-anchor: middle; fill: #fff; }
.t-qt { font: italic bold 11px "Liberation Sans", sans-serif; text-anchor: middle; fill: #fff; }
.t-mod { font: bold 5px "Liberation Sans", sans-serif; text-anchor: middle; fill: #fff; }

/* Status bar */
.status {
    display: flex;
    justify-content: flex-end;
    flex: none;
    height: 18px;
    border-top: 1px solid #9da1aa;
    background: linear-gradient(#e0e3ec, #c2c7d0 45%, #a8aeb6 55%, #bbbfc8);
    line-height: 17px;
    color: #2c2e33;
}
.status span { padding: 0 1px 0 3px; border-left: 1px solid #80848e; white-space: nowrap; }

/* Taskbar */
.taskbar { display: flex; flex: none; height: 40px; background: #001008; color: #fff; }
.taskbar button {
    width: 49px;
    flex: none;
    display: flex;
    align-items: center;
    justify-content: center;
    border-bottom: 2px solid transparent;
}
.taskbar svg { width: 24px; height: 24px; flex: none; }
.taskbar .start { width: 48px; }
.taskbar .open { background: linear-gradient(#76aef0, #76aef0) center bottom / 40px 2px no-repeat border-box; }
.taskbar .active { background: #334439; border-bottom-color: #76aef0; }
.search { display: flex; align-items: center; width: 345px; padding: 0 9px 0 8px; background: #333; flex: none; }
.search input {
    flex: 1;
    min-width: 0;
    padding: 0 4px;
    border: 0;
    background: none;
    font: 14px "Open Sans", sans-serif;
    color: #fff;
}
.search input::placeholder { color: #a0a0a0; opacity: 1; }
.tray { display: flex; margin-left: auto; padding-right: 13px; }
.tray button { width: 28px; }
.tray svg { width: 22px; height: 22px; }
.clock { width: 72px; display: flex; flex-direction: column; justify-content: center; text-align: center; font-size: 12px; line-height: 18px; }
.tray .notes { position: relative; width: 36px; }
.badge {
    position: absolute;
    right: 1px;
    bottom: 2px;
    width: 18px;
    height: 18px;
    border: 1px solid #888;
    border-radius: 50%;
    background: #222;
    font-size: 12px;
    line-height: 16px;
}
```
FILE: map.js
```js
// Draw the Lidar preview as a noisy elevation ramp
const canvas = document.getElementById('cloud');
const ctx = canvas.getContext('2d');

let seed = 7;
function rand() {
    seed = (seed * 16807) % 2147483647;
    return seed / 2147483647;
}

// elevation colors, low to high
const ramp = [
    [0, 20, 130], [0, 90, 190], [0, 180, 190], [0, 140, 80], [30, 135, 10],
    [80, 145, 0], [140, 155, 0], [165, 125, 0], [165, 85, 5]
];

// shoreline height for each column
function shore(x) {
    if (x < 40) return 80 + x * 0.25;
    return 90 - Math.sin((x - 40) / 35 * 3.1) * 2 - (x - 40) * 0.12;
}

for (let x = 0; x < 75; x++) {
    for (let y = 0; y < 98; y++) {
        const edge = shore(x) - y;
        if (edge < 0) continue;
        let level = 6.4 + (rand() + rand() - 1) * 2.8;
        level -= Math.max(0, y - 40) * 0.05;
        // wet spots near the coast
        level -= 3 * Math.exp(-((x - 46) ** 2) / 60 - ((y - 77) ** 2) / 160);
        level -= 2.5 * Math.exp(-((x - 3) ** 2) / 20 - ((y - 65) ** 2) / 60);
        level -= 1.6 * Math.exp(-((x - 28) ** 2) / 60 - ((y - 30) ** 2) / 60);
        if (edge < 4) level = edge * 0.4;
        const c = ramp[Math.max(0, Math.min(8, Math.round(level)))];
        ctx.fillStyle = `rgb(${c[0]},${c[1]},${c[2]})`;
        ctx.fillRect(x, y, 1, 1);
    }
}

// creeks
ctx.fillStyle = '#001480';
ctx.fillRect(11, 80, 1, 9);
ctx.fillRect(10, 88, 1, 4);
ctx.fillRect(40, 88, 1, 10);
ctx.fillRect(71, 84, 1, 8);
```
